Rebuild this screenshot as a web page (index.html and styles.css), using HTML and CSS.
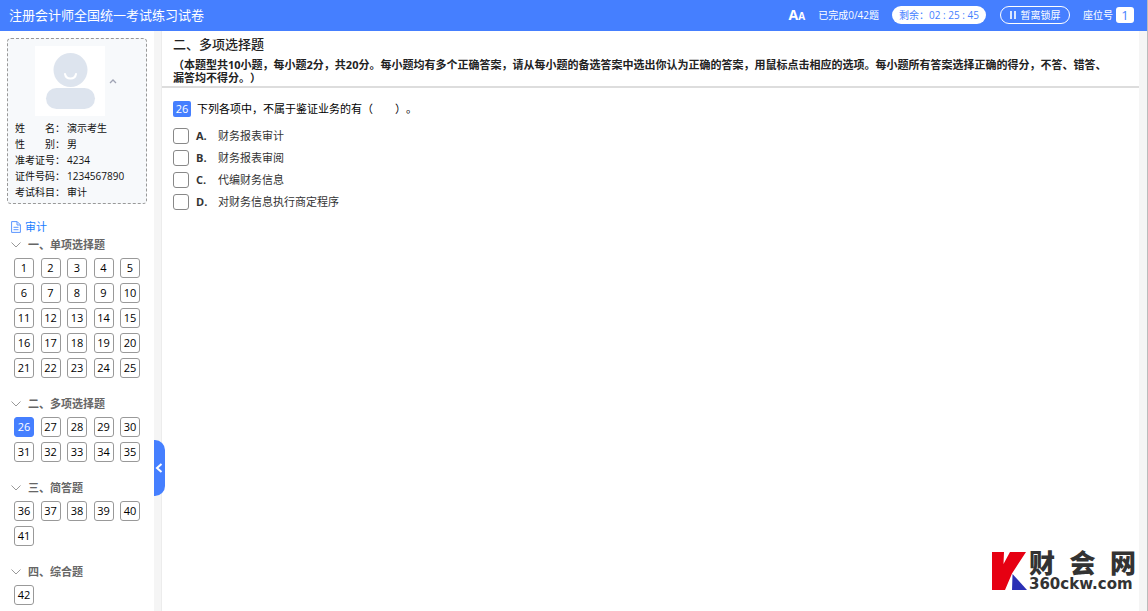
FILE: index.html
```html
<!DOCTYPE html>
<html lang="zh-CN">
<head>
<meta charset="utf-8">
<title>注册会计师全国统一考试练习试卷</title>
<link rel="stylesheet" href="styles.css">
</head>
<body>
<header class="topbar">
  <h1 class="topbar-title">注册会计师全国统一考试练习试卷</h1>
  <button class="font-size" type="button" aria-label="字号"><span class="font-big">A</span><span class="font-small">A</span></button>
  <span class="progress">已完成0/42题</span>
  <span class="timer">剩余：02 : 25 : 45</span>
  <button class="lock" type="button">
    <svg width="6" height="8" viewBox="0 0 6 8" aria-hidden="true"><path d="M1 0v8M5 0v8" stroke="#fff" stroke-width="1.6"/></svg>
    暂离锁屏
  </button>
  <span class="seat">座位号<b class="seat-no">1</b></span>
</header>
<div class="layout">
  <aside class="sidebar">
    <section class="profile">
      <div class="avatar-row">
        <svg class="avatar" width="70" height="70" viewBox="0 0 70 70" role="img" aria-label="头像">
          <rect width="70" height="70" fill="#fff"/>
          <circle cx="35.500" cy="24" r="17" fill="#dde4ee"/>
          <rect x="11" y="42" width="49" height="21" rx="10.500" fill="#dde4ee"/>
          <path d="M30 28c1 6 10 6 11 0" fill="none" stroke="#fff" stroke-width="2" stroke-linecap="round"/>
        </svg>
        <button class="fold" type="button" aria-label="收起"><svg width="8" height="5" viewBox="0 0 8 5"><path d="M1 4l3-3 3 3" fill="none" stroke="#a0a4b4" stroke-width="1.300"/></svg></button>
      </div>
      <dl class="info">
        <dt><span>姓</span><span>名：</span></dt><dd>演示考生</dd>
        <dt><span>性</span><span>别：</span></dt><dd>男</dd>
        <dt>准考证号：</dt><dd>4234</dd>
        <dt>证件号码：</dt><dd>1234567890</dd>
        <dt>考试科目：</dt><dd>审计</dd>
      </dl>
    </section>
    <a class="subject" href="#paper">
      <svg width="10" height="12" viewBox="0 0 10 12" aria-hidden="true"><path d="M.6.6h5.600l3.200 3.200v7.600H.6zM6 .8V4h3.200M2.500 6.300h5M2.500 8.700h5" fill="none" stroke="#5b95ff"/></svg>
      审计
    </a>
    <nav class="groups">
      <section class="group">
        <h2 class="group-title"><svg width="10" height="6" viewBox="0 0 10 6" aria-hidden="true"><path d="M.5.500L5 5 9.500.5" fill="none" stroke="#999"/></svg>一、单项选择题</h2>
        <div class="numbers">
          <button type="button">1</button><button type="button">2</button><button type="button">3</button><button type="button">4</button><button type="button">5</button>
          <button type="button">6</button><button type="button">7</button><button type="button">8</button><button type="button">9</button><button type="button">10</button>
          <button type="button">11</button><button type="button">12</button><button type="button">13</button><button type="button">14</button><button type="button">15</button>
          <button type="button">16</button><button type="button">17</button><button type="button">18</button><button type="button">19</button><button type="button">20</button>
          <button type="button">21</button><button type="button">22</button><button type="button">23</button><button type="button">24</button><button type="button">25</button>
        </div>
      </section>
      <section class="group">
        <h2 class="group-title"><svg width="10" height="6" viewBox="0 0 10 6" aria-hidden="true"><path d="M.5.500L5 5 9.500.5" fill="none" stroke="#999"/></svg>二、多项选择题</h2>
        <div class="numbers">
          <button type="button" class="current">26</button><button type="button">27</button><button type="button">28</button><button type="button">29</button><button type="button">30</button>
          <button type="button">31</button><button type="button">32</button><button type="button">33</button><button type="button">34</button><button type="button">35</button>
        </div>
      </section>
      <section class="group">
        <h2 class="group-title"><svg width="10" height="6" viewBox="0 0 10 6" aria-hidden="true"><path d="M.5.500L5 5 9.500.5" fill="none" stroke="#999"/></svg>三、简答题</h2>
        <div class="numbers">
          <button type="button">36</button><button type="button">37</button><button type="button">38</button><button type="button">39</button><button type="button">40</button>
          <button type="button">41</button>
        </div>
      </section>
      <section class="group">
        <h2 class="group-title"><svg width="10" height="6" viewBox="0 0 10 6" aria-hidden="true"><path d="M.5.500L5 5 9.500.5" fill="none" stroke="#999"/></svg>四、综合题</h2>
        <div class="numbers">
          <button type="button">42</button>
        </div>
      </section>
    </nav>
  </aside>
  <div class="gutter">
    <button class="collapse" type="button" aria-label="收起侧栏"><svg width="8" height="10" viewBox="0 0 8 10"><path d="M6.500 1L2 5l4.500 4" fill="none" stroke="#fff" stroke-width="2"/></svg></button>
  </div>
  <main class="paper" id="paper">
    <header class="section-head">
      <h2 class="section-title">二、多项选择题</h2>
      <p class="section-desc">（本题型共10小题，每小题2分，共20分。每小题均有多个正确答案，请从每小题的备选答案中选出你认为正确的答案，用鼠标点击相应的选项。每小题所有答案选择正确的得分，不答、错答、漏答均不得分。）</p>
    </header>
    <section class="question">
      <p class="stem"><span class="badge">26</span>下列各项中，不属于鉴证业务的有（&emsp;&emsp;）。</p>
      <div class="options">
        <label class="option"><input type="checkbox"><b>A.</b><span>财务报表审计</span></label>
        <label class="option"><input type="checkbox"><b>B.</b><span>财务报表审阅</span></label>
        <label class="option"><input type="checkbox"><b>C.</b><span>代编财务信息</span></label>
        <label class="option"><input type="checkbox"><b>D.</b><span>对财务信息执行商定程序</span></label>
      </div>
    </section>
  </main>
</div>
<div class="brand">
  <svg width="36" height="38" viewBox="0 0 36 38" aria-hidden="true">
    <path d="M0 0h12l-.5 12L18 0h16L20 21.500 13 38H0z" fill="#e60012"/>
    <path d="M20.500 22L35 38H20z" fill="#2a2fb5"/>
  </svg>
  <div class="brand-text">
    <div class="brand-name"><span>财</span><span>会</span><span>网</span></div>
    <div class="brand-site">360ckw.com</div>
  </div>
</div>
</body>
</html>
```

FILE: styles.css
```css
* { box-sizing: border-box; }
body, h1, h2, p, dl, dd { margin: 0; }
body {
  display: flex;
  flex-direction: column;
  height: 100vh;
  overflow: hidden;
  border-right: 1px solid #bbb;
  background: #fff;
  color: #222;
  font: 11px/16px "Open Sans", "Noto Sans CJK SC", sans-serif;
  text-spacing-trim: space-all;
}
button {
  padding: 0;
  border: 0;
  background: none;
  color: inherit;
  font: inherit;
  cursor: pointer;
}
svg { display: block; flex: none; }

.topbar {
  display: flex;
  align-items: center;
  flex: none;
  height: 31px;
  padding: 0 13px 1px 9px;
  background: #457fff;
  color: #fff;
  font-size: 10px;
}
.topbar-title {
  margin-right: auto;
  font-size: 13px;
  font-weight: 400;
}
.font-size {
  display: flex;
  align-items: baseline;
  margin-right: 13px;
  font-family: "Open Sans", sans-serif;
  font-weight: 700;
}
.font-big { font-size: 14px; }
.font-small { font-size: 10px; }
.progress { margin-right: 13px; }
.timer {
  width: 94px;
  margin-right: 14px;
  border-radius: 9px;
  background: #fff;
  color: #457fff;
  line-height: 18px;
  text-align: center;
}
.lock {
  display: flex;
  align-items: center;
  justify-content: center;
  gap: 5px;
  width: 70px;
  height: 18px;
  margin-right: 13px;
  border: 1px solid #fff;
  border-radius: 9px;
}
.seat {
  display: flex;
  align-items: center;
  gap: 3px;
}
.seat-no {
  width: 18px;
  border-radius: 3px;
  background: #fff;
  color: #457fff;
  font-size: 13px;
  font-weight: 400;
  text-align: center;
}

.layout {
  display: flex;
  flex: 1;
  min-height: 0;
}
.sidebar {
  flex: none;
  width: 154px;
  padding: 7px 7px 0;
  overflow: hidden;
}
.profile {
  padding: 7px;
  padding-bottom: 3px;
  border: 1px dashed #999;
  border-radius: 4px;
  background: #f7f9fb;
}
.avatar-row {
  display: flex;
  align-items: center;
  gap: 3px;
  margin-bottom: 4px;
  padding-left: 20px;
}
.fold { padding: 4px 1px; }
.info {
  display: grid;
  grid-template-columns: 50px 1fr;
  column-gap: 2px;
  color: #111;
  font-size: 10px;
}
.info dt {
  display: flex;
  justify-content: space-between;
}
.subject {
  display: flex;
  align-items: center;
  gap: 4px;
  margin: 15px 4px 0;
  color: #1a7dff;
  text-decoration: none;
}
.groups { padding: 0 0 0 4px; }
.group { margin-bottom: 16px; }
.group-title {
  display: flex;
  align-items: center;
  gap: 7px;
  color: #666;
  font-size: 11px;
  font-weight: 700;
  line-height: 20px;
}
.numbers {
  display: grid;
  grid-template-columns: repeat(5, 20px);
  justify-content: space-between;
  row-gap: 5px;
  margin: 3px 7px 0 3px;
}
.numbers button {
  height: 20px;
  border: 1px solid #999;
  border-radius: 3px;
  color: #000;
}
.numbers .current {
  border-color: #457fff;
  background: #457fff;
  color: #fff;
}

.gutter {
  position: relative;
  flex: none;
  width: 8px;
  border-right: 1px solid #ececec;
  background: #f5f5f5;
}
.collapse {
  position: absolute;
  top: calc(50% + 119px);
  left: 0;
  width: 11px;
  height: 56px;
  padding-left: 1px;
  border-radius: 0 10px 10px 0;
  background: #457fff;
}

.paper {
  flex: 1;
  min-width: 0;
  margin-right: 8px;
  box-shadow: 8px 0 #f5f5f5;
}
.section-head {
  padding: 4px 28px 2px 11px;
  border-bottom: 2px solid #ddd;
}
.section-title {
  margin-bottom: 5px;
  font-size: 13px;
  font-weight: 500;
  line-height: 18px;
}
.section-desc {
  font-weight: 700;
  line-height: 13px;
}
.question { padding: 13px 11px; }
.stem {
  display: flex;
  align-items: center;
  color: #000;
}
.badge {
  width: 18px;
  margin-right: 6px;
  border-radius: 2px;
  background: #457fff;
  color: #fff;
  text-align: center;
}
.options { margin-top: 8px; }
.option {
  display: flex;
  align-items: center;
  height: 22px;
  color: #333;
}
.option input {
  appearance: none;
  width: 16px;
  height: 16px;
  margin: 0 7px 0 0;
  border: 1px solid #888;
  border-radius: 3px;
  background: #fff;
}
.option b { width: 22px; }

.brand {
  position: absolute;
  right: 12px;
  bottom: 21px;
  display: flex;
  align-items: flex-end;
  gap: 1px;
  color: #333;
}
.brand-text { width: 107px; }
.brand-name {
  display: flex;
  justify-content: space-between;
  font-size: 26px;
  font-weight: 900;
  line-height: 30px;
}
.brand-site {
  font: 700 15px/12px "DejaVu Sans", sans-serif;
}
```
